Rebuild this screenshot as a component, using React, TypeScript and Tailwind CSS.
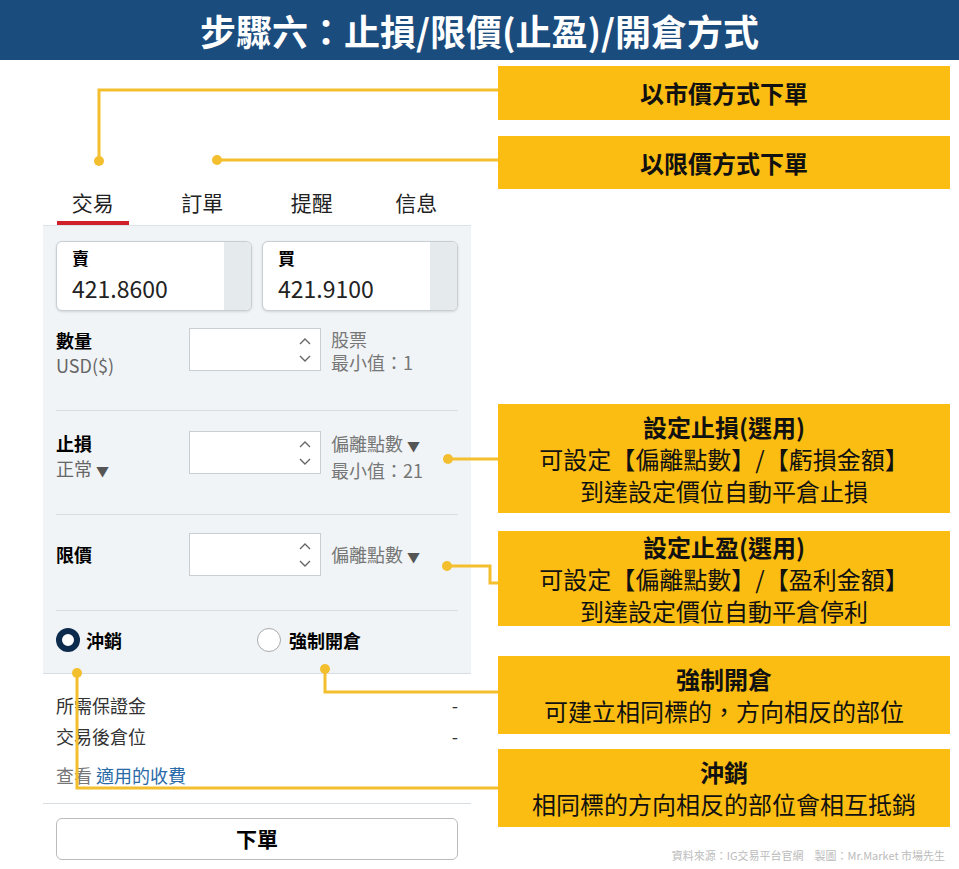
import React from "react";

const F = { fontFamily: '"Noto Sans CJK TC","Noto Sans",sans-serif' };

function Spin() {
  return (
    <div className="w-[132px] h-[43px] bg-white border border-[#c9ced3] flex justify-end items-center pr-2">
      <svg width="14" height="30" viewBox="0 0 14 30" fill="none" stroke="#666" strokeWidth="1.4">
        <path d="M2 9 L7 4 L12 9" />
        <path d="M2 21 L7 26 L12 21" />
      </svg>
    </div>
  );
}

const Tri = () => <span className="inline-block text-[13px] ml-1 text-[#555]">▼</span>;

function Callout({ h, children }: { h: number; children: React.ReactNode }) {
  return (
    <div className="bg-[#fbbd12] flex flex-col items-center justify-center text-[#111] text-[24px] leading-[32px]" style={{ height: h }}>
      {children}
    </div>
  );
}

export default function App() {
  return (
    <div className="w-[959px] h-[869px] bg-white relative overflow-hidden" style={F}>
      <div className="h-[60px] bg-[#1b4c7e] flex items-center justify-center text-white text-[36px] font-bold">
        步驟六：止損/限價(止盈)/開倉方式
      </div>
      <div className="flex">
        <div className="w-[428px] ml-[43px] mt-[125px]">
          <div className="flex h-[41px] text-[21px] text-[#222] border-b border-[#dde2e6]">
            <div className="w-[100px] flex flex-col items-center"><span className="mt-[2px]">交易</span><div className="mt-auto w-[72px] h-[4px] bg-[#d0202a]" /></div>
            <div className="w-[120px] text-center mt-[2px]">訂單</div>
            <div className="w-[100px] text-center mt-[2px]">提醒</div>
            <div className="w-[110px] text-center mt-[2px]">信息</div>
          </div>
          <div className="bg-[#f0f4f6] px-[13px] pt-[15px] h-[447px]">
            <div className="flex gap-[10px]">
              {[["賣", "421.8600"], ["買", "421.9100"]].map(([a, b]) => (
                <div key={a} className="flex-1 h-[70px] bg-white border border-[#c9ced3] rounded-md shadow-sm flex overflow-hidden">
                  <div className="flex-1 pl-[15px] pt-[3px]">
                    <div className="text-[17px] font-bold leading-[26px]">{a}</div>
                    <div className="text-[23px] text-[#222] leading-[34px]">{b}</div>
                  </div>
                  <div className="w-[27px] bg-[#e5eaed]" />
                </div>
              ))}
            </div>
            <div className="flex h-[100px] pt-[17px] border-b border-[#d8dde1]">
              <div className="w-[133px] text-[18px] leading-[25px]"><div className="font-bold">數量</div><div className="text-[#666]">USD($)</div></div>
              <Spin />
              <div className="ml-[10px] text-[18px] text-[#777] leading-[23px]"><div>股票</div><div>最小值：1</div></div>
            </div>
            <div className="flex h-[104px] pt-[20px] border-b border-[#d8dde1]">
              <div className="w-[133px] text-[18px] leading-[25px]"><div className="font-bold">止損</div><div className="text-[#666]">正常<Tri /></div></div>
              <Spin />
              <div className="ml-[10px] text-[18px] text-[#777] leading-[25px]"><div>偏離點數<Tri /></div><div>最小值：21</div></div>
            </div>
            <div className="flex h-[96px] pt-[18px] border-b border-[#d8dde1]">
              <div className="w-[133px] text-[18px] font-bold leading-[43px]">限價</div>
              <Spin />
              <div className="ml-[10px] text-[18px] text-[#777] leading-[43px]">偏離點數<Tri /></div>
            </div>
            <div className="flex items-center h-[58px] text-[18px] font-bold">
              <div className="w-[24px] h-[24px] rounded-full border-[6px] border-[#0d2b4d] bg-white" />
              <span className="ml-[6px] w-[171px]">沖銷</span>
              <div className="w-[24px] h-[24px] rounded-full border border-[#aaa] bg-white" />
              <span className="ml-[8px]">強制開倉</span>
            </div>
          </div>
          <div className="border-t border-[#d8dde1] px-[13px] pt-[16px] text-[18px] text-[#333] leading-[31px]">
            <div className="flex justify-between"><span>所需保證金</span><span>-</span></div>
            <div className="flex justify-between"><span>交易後倉位</span><span>-</span></div>
            <div className="mt-[8px] text-[#777]">查看 <span className="text-[#2a6aa8]">適用的收費</span></div>
          </div>
          <div className="border-t border-[#d8dde1] mt-[12px] px-[13px] pt-[14px]">
            <div className="h-[42px] border border-[#bbb] rounded-md bg-white flex items-center justify-center text-[21px] font-bold">下單</div>
          </div>
        </div>
        <div className="absolute left-[498px] top-[66px] w-[452px] flex flex-col font-bold">
          <Callout h={54}>以市價方式下單</Callout>
          <div className="h-[16px]" />
          <Callout h={53}>以限價方式下單</Callout>
        </div>
        <div className="absolute left-[498px] top-[404px] w-[452px] flex flex-col">
          <Callout h={109}><b>設定止損(選用)</b><span>可設定【偏離點數】/【虧損金額】</span><span>到達設定價位自動平倉止損</span></Callout>
          <div className="h-[18px]" />
          <Callout h={95}><b>設定止盈(選用)</b><span>可設定【偏離點數】/【盈利金額】</span><span>到達設定價位自動平倉停利</span></Callout>
          <div className="h-[30px]" />
          <Callout h={78}><b>強制開倉</b><span>可建立相同標的，方向相反的部位</span></Callout>
          <div className="h-[15px]" />
          <Callout h={78}><b>沖銷</b><span>相同標的方向相反的部位會相互抵銷</span></Callout>
        </div>
      </div>
      <svg className="absolute left-0 top-0 pointer-events-none" width="959" height="869" fill="none" stroke="#f3bf2e" strokeWidth="3">
        <path d="M99 161 V90 H498" />
        <path d="M217 160 H498" />
        <path d="M448 459 H498" />
        <path d="M447 566 H490 V583 H498" />
        <path d="M325 669 V692 H498" />
        <path d="M77 673 V788 H498" />
        <g fill="#f3bf2e" stroke="none">
          <circle cx="99" cy="161" r="5" /><circle cx="217" cy="160" r="5" /><circle cx="448" cy="459" r="5" />
          <circle cx="447" cy="566" r="5" /><circle cx="325" cy="669" r="5" /><circle cx="77" cy="673" r="5" />
        </g>
      </svg>
      <div className="absolute right-[14px] bottom-[6px] text-[11px] text-[#bbb]">資料來源：IG交易平台官網　製圖：Mr.Market 市場先生</div>
    </div>
  );
}
